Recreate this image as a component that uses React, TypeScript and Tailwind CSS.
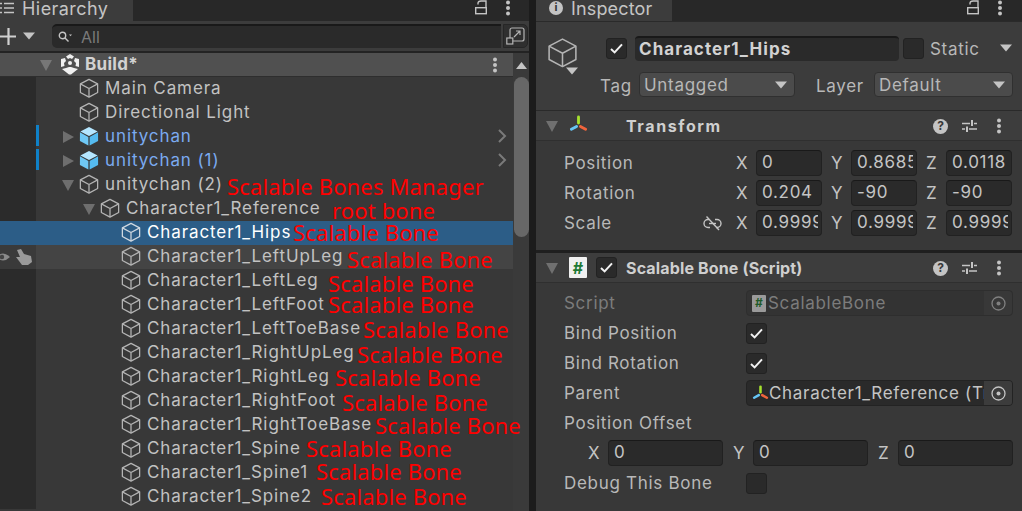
import React from "react";

const F = { fontFamily: "Inter, 'Noto Sans', sans-serif" };

function Cube({ size = 22, color = "#bdbdbd", fill = false, sw = 1.4 }: { size?: number; color?: string; fill?: boolean; sw?: number }) {
  if (fill) {
    return (
      <svg width={size} height={size} viewBox="0 0 22 22" className="shrink-0">
        <path d="M11 1 L20.5 6 L11 11 L1.5 6Z" fill="#b4e6ff" />
        <path d="M1 7 L10.3 12 V21.5 L1 16.5Z" fill="#6fc8f5" />
        <path d="M21 7 L11.7 12 V21.5 L21 16.5Z" fill="#55bbf0" />
      </svg>
    );
  }
  return (
    <svg width={size} height={size} viewBox="0 0 22 22" className="shrink-0" fill="none" stroke={color} strokeWidth={sw} strokeLinejoin="round">
      <path d="M11 1.5 L20.5 6.5 V16 L11 21 L1.5 16 V6.5Z" />
      <path d="M1.5 6.5 L11 11.5 L20.5 6.5 M11 11.5 V21" />
    </svg>
  );
}

function Tri({ open, color = "#6e6e6e" }: { open?: boolean; color?: string }) {
  return open ? (
    <svg width="14" height="14" viewBox="0 0 14 14" className="shrink-0"><path d="M1 2 H13 L7 13Z" fill={color} /></svg>
  ) : (
    <svg width="14" height="14" viewBox="0 0 14 14" className="shrink-0"><path d="M2 1 L13 7 L2 13Z" fill={color} /></svg>
  );
}

function Dots({ color = "#c4c4c4" }: { color?: string }) {
  return (
    <svg width="6" height="16" viewBox="0 0 6 16" className="shrink-0"><circle cx="3" cy="2.5" r="2" fill={color} /><circle cx="3" cy="8" r="2" fill={color} /><circle cx="3" cy="13.5" r="2" fill={color} /></svg>
  );
}

function Lock() {
  return (
    <svg width="14" height="15" viewBox="0 0 14 15" fill="none" stroke="#c4c4c4" strokeWidth="1.4" className="shrink-0">
      <rect x="1.7" y="7.7" width="10.6" height="6" />
      <path d="M4 4.5 V3.5 Q4 1 7 1 H12 V7.5" />
    </svg>
  );
}

function Axes({ size = 20 }: { size?: number }) {
  return (
    <svg width={size} height={size} viewBox="0 0 20 20" className="shrink-0" fill="none" strokeLinecap="round">
      <path d="M10 2 V8.5" stroke="#a6e22e" strokeWidth="3" />
      <path d="M8 12 L2.5 15" stroke="#66c6f5" strokeWidth="3" />
      <path d="M12 12 L17.5 15" stroke="#f0643c" strokeWidth="3" />
    </svg>
  );
}

function Check({ checked = false }: { checked?: boolean }) {
  return (
    <div className="w-[21px] h-[21px] rounded-[3px] bg-[#2a2a2a] border border-[#222] flex items-center justify-center shrink-0">
      {checked && (
        <svg width="13" height="11" viewBox="0 0 13 11" fill="none" stroke="#f2f2f2" strokeWidth="2"><path d="M1 6 L4.6 9.4 L12 1.4" /></svg>
      )}
    </div>
  );
}

function Caret({ color = "#c4c4c4" }: { color?: string }) {
  return <svg width="12" height="8" viewBox="0 0 12 8" className="shrink-0"><path d="M0 0.5 H12 L6 7.5Z" fill={color} /></svg>;
}

function Target({ color = "#a8a8a8" }: { color?: string }) {
  return (
    <svg width="15" height="15" viewBox="0 0 15 15" fill="none" className="shrink-0">
      <circle cx="7.5" cy="7.5" r="6.5" stroke={color} strokeWidth="1.3" />
      <circle cx="7.5" cy="7.5" r="2" fill={color} />
    </svg>
  );
}

function Help() {
  return (
    <div className="w-[15px] h-[15px] rounded-full bg-[#c4c4c4] flex items-center justify-center text-[#383838] text-[12px] font-bold leading-none shrink-0">?</div>
  );
}

function Sliders() {
  return (
    <svg width="15" height="14" viewBox="0 0 15 14" fill="none" stroke="#c4c4c4" strokeWidth="1.4" className="shrink-0">
      <path d="M0 4.5 H8 M12 4.5 H15 M0 10 H3 M7 10 H15" />
      <path d="M10 1 V7 M5 7.5 V13" strokeWidth="2" />
    </svg>
  );
}

function ScriptIcon({ dim = false, size = 18 }: { dim?: boolean; size?: number }) {
  return (
    <div
      className={`flex items-center justify-center font-bold shrink-0 rounded-[1px] ${dim ? "bg-[#9a9a9a] text-[#1f5a2a]" : "bg-[#f0f0f0] text-[#1f7a35]"}`}
      style={{ width: size, height: size + 3, fontSize: size - 2, lineHeight: 1 }}
    >#</div>
  );
}

type Item = { label: string; x: number; icon?: "cube" | "prefab"; tri?: "open" | "closed"; note?: string; nx?: number; ny?: number; blue?: boolean; bar?: boolean; chev?: boolean; sel?: boolean; hover?: boolean };

const rows: Item[] = [
  { label: "Main Camera", x: 79 },
  { label: "Directional Light", x: 79 },
  { label: "unitychan", x: 79, icon: "prefab", tri: "closed", blue: true, bar: true, chev: true },
  { label: "unitychan (1)", x: 79, icon: "prefab", tri: "closed", blue: true, bar: true, chev: true },
  { label: "unitychan (2)", x: 79, tri: "open", note: "Scalable Bones Manager", nx: 227, ny: 1 },
  { label: "Character1_Reference", x: 100, tri: "open", note: "root bone", nx: 332, ny: 1 },
  { label: "Character1_Hips", x: 121, sel: true, note: "Scalable Bone", nx: 293, ny: -1 },
  { label: "Character1_LeftUpLeg", x: 121, hover: true, note: "Scalable Bone", nx: 347, ny: 2 },
  { label: "Character1_LeftLeg", x: 121, note: "Scalable Bone", nx: 328, ny: 2 },
  { label: "Character1_LeftFoot", x: 121, note: "Scalable Bone", nx: 328, ny: -1 },
  { label: "Character1_LeftToeBase", x: 121, note: "Scalable Bone", nx: 363, ny: 0 },
  { label: "Character1_RightUpLeg", x: 121, note: "Scalable Bone", nx: 357, ny: 1 },
  { label: "Character1_RightLeg", x: 121, note: "Scalable Bone", nx: 335, ny: 0 },
  { label: "Character1_RightFoot", x: 121, note: "Scalable Bone", nx: 342, ny: 1 },
  { label: "Character1_RightToeBase", x: 121, note: "Scalable Bone", nx: 375, ny: 0 },
  { label: "Character1_Spine", x: 121, note: "Scalable Bone", nx: 306, ny: -1 },
  { label: "Character1_Spine1", x: 121, note: "Scalable Bone", nx: 316, ny: -2 },
  { label: "Character1_Spine2", x: 121, note: "Scalable Bone", nx: 321, ny: -1 },
];

function Row({ r }: { r: Item }) {
  const bg = r.sel ? "bg-[#2c5d87]" : r.hover ? "bg-[#444444]" : "";
  return (
    <div className={`relative h-[24px] flex items-center shrink-0 ${bg}`}>
      <div className={`absolute left-0 top-0 h-full w-[36px] ${r.sel ? "bg-[#2c5d87]" : r.hover ? "bg-[#3a3a3a]" : "bg-[#2b2b2b]"}`} />
      {r.bar && <div className="absolute left-[36px] top-0 w-[3px] h-[21px] bg-[#0f81c8]" />}
      {r.hover && (
        <svg width="33" height="20" viewBox="0 0 33 20" className="absolute left-0 top-[2px]">
          <path d="M-4 10 Q3 3 10 10 Q3 17 -4 10Z" fill="#8a8a8a" />
          <circle cx="2" cy="10" r="2.2" fill="#444444" />
          <path d="M17 3 L21 2 L24 7 L31 9 L32 15 L28 18 L22 18 L16 10 L20 10Z" fill="#9a9a9a" />
        </svg>
      )}
      {r.tri && (
        <div className="absolute top-[5px]" style={{ left: r.x - 18 }}><Tri open={r.tri === "open"} /></div>
      )}
      <div className="absolute top-[1px]" style={{ left: r.x }}>
        <Cube size={20} fill={r.icon === "prefab"} color={r.sel ? "#d0d8e0" : "#b4b4b4"} sw={1.4} />
      </div>
      <span
        className={`absolute top-0 leading-[22px] text-[17px] tracking-[0.9px] whitespace-nowrap ${r.blue ? "text-[#7baaf0]" : r.sel ? "text-[#ffffff]" : "text-[#c2c2c2]"}`}
        style={{ left: r.x + 26 }}
      >{r.label}</span>
      {r.chev && (
        <svg width="9" height="14" viewBox="0 0 9 14" fill="none" stroke="#7a7a7a" strokeWidth="2" className="absolute left-[498px] top-[4px]"><path d="M1 1 L7 7 L1 13" /></svg>
      )}
      {r.note && (
        <span
          className="absolute text-[#ff0000] text-[22px] leading-[24px] tracking-[0.15px] whitespace-nowrap z-10"
          style={{ left: r.nx, top: r.ny, fontFamily: "'Noto Sans', sans-serif" }}
        >{r.note}</span>
      )}
    </div>
  );
}

function Hierarchy() {
  return (
    <div className="w-[529px] h-full flex flex-col shrink-0 bg-[#383838]">
      <div className="h-[21px] shrink-0 flex bg-[#282828]">
        <div className="w-[133px] bg-[#3c3c3c] flex items-center">
          <svg width="14" height="12" viewBox="0 0 14 12" className="shrink-0 -translate-y-[3px]" stroke="#c4c4c4" strokeWidth="1.3"><path d="M0 1.5 H2 M4 1.5 H14 M0 6 H2 M4 6 H14 M0 10.5 H2 M4 10.5 H14" /></svg>
          <span className="ml-[8px] text-[18px] leading-[18px] text-[#c4c4c4] tracking-[0.45px] -translate-y-[2px]">Hierarchy</span>
        </div>
        <div className="flex-1 flex items-center justify-end pr-[18px] gap-[17px] -translate-y-[3px]">
          <Lock />
          <Dots />
        </div>
      </div>
      <div className="h-[32px] shrink-0 bg-[#3c3c3c] border-b-2 border-[#232323] flex items-center">
        <svg width="17" height="17" viewBox="0 0 17 17" stroke="#d0d0d0" strokeWidth="2.2" className="shrink-0"><path d="M0 8.5 H16 M8.5 0 V17" /></svg>
        <div className="ml-[6px]"><Caret /></div>
        <div className="ml-[17px] w-[449px] h-[24px] rounded-l-[5px] bg-[#2a2a2a] border-t-2 border-[#191919] flex items-center pl-[6px]">
          <svg width="14" height="12" viewBox="0 0 14 12" fill="none" stroke="#c4c4c4" strokeWidth="1.4" className="shrink-0"><circle cx="4.5" cy="4.5" r="3.2" /><path d="M7 7 L10.5 10.5" /><path d="M11 3.5 H14 L12.5 5.2Z" fill="#c4c4c4" stroke="none" /></svg>
          <span className="ml-[9px] text-[#7a7a7a] text-[16px] leading-none">All</span>
        </div>
        <div className="ml-[2px] w-[25px] h-[24px] rounded-r-[5px] bg-[#2f2f2f] border border-[#262626] flex items-center justify-center">
          <svg width="19" height="18" viewBox="0 0 19 18" fill="none" stroke="#b4b4b4" strokeWidth="1.2">
            <rect x="4" y="1" width="14" height="13" rx="2" />
            <rect x="0.8" y="11" width="6" height="6" fill="#2f2f2f" />
            <path d="M8 10 L14 4 M10 4 H14 V8" />
          </svg>
        </div>
      </div>
      <div className="flex-1 flex min-h-0">
        <div className="w-[513px] flex flex-col relative z-10">
          <div className="h-[24px] shrink-0 relative bg-[#505050] border-b border-[#2e2e2e] flex items-center">
            <div className="absolute left-[39px] top-[5px]"><Tri open color="#777777" /></div>
            <svg width="20" height="21" viewBox="0 0 20 21" className="absolute left-[60px] top-[1px]" fill="#f0f0f0">
              <path d="M10 0 L14 2.5 L12 5 L10 4 L8 5 L6 2.5Z" />
              <path d="M1 5 L5 4 L6 7 L4 9 L4.5 12 L1 13Z" />
              <path d="M19 5 L15 4 L14 7 L16 9 L15.5 12 L19 13Z" />
              <path d="M6 14 L9 13 H11 L14 14 L18 15 L11 20.5 H9 L2 15Z" />
              <circle cx="10" cy="9" r="2" />
            </svg>
            <span className="absolute left-[85px] top-0 leading-[22px] text-[17px] font-bold text-[#d2d2d2] tracking-[0.3px]">Build*</span>
            <div className="absolute left-[492px] top-[4px]"><Dots /></div>
          </div>
          {rows.map((r) => (
            <Row key={r.label} r={r} />
          ))}
        </div>
        <div className="w-[16px] bg-[#3a3a3a] flex flex-col items-center shrink-0 pt-[9px]">
          <svg width="11" height="7" viewBox="0 0 11 7"><path d="M0 7 L5.5 0 L11 7Z" fill="#c4c4c4" /></svg>
          <div className="mt-[8px] w-[15px] h-[160px] rounded-[8px] bg-[#676767]" />
        </div>
      </div>
    </div>
  );
}

function VField({ v, w = "w-[66px]" }: { v: string; w?: string }) {
  return (
    <div className={`${w} h-[26px] shrink-0 rounded-[4px] bg-[#2a2a2a] border border-[#212121] border-t-[#191919] flex items-center pl-[5px] pr-[3px]`}>
      <span className="text-[#c4c4c4] text-[17px] tracking-[0.7px] whitespace-nowrap overflow-hidden">{v}</span>
    </div>
  );
}

function Axis({ a, v, w, lw = "w-[21px] pl-[1px]" }: { a: string; v: string; w?: string; lw?: string }) {
  return (
    <div className="flex items-center">
      <span className={`${lw} text-[#c4c4c4] text-[17px] leading-none`}>{a}</span>
      <VField v={v} w={w} />
    </div>
  );
}

function Label({ children, dim, className = "" }: { children: React.ReactNode; dim?: boolean; className?: string }) {
  return <span className={`text-[17px] tracking-[0.7px] leading-none whitespace-nowrap ${dim ? "text-[#7c7c7c]" : "text-[#b8b8b8]"} ${className}`}>{children}</span>;
}

function Prop({ label, children, dim }: { label: string; children?: React.ReactNode; dim?: boolean }) {
  return (
    <div className="h-[30px] flex items-center shrink-0 pl-[28px] pr-[9px]">
      <div className="w-[182px] shrink-0"><Label dim={dim}>{label}</Label></div>
      {children}
    </div>
  );
}

function Vec({ label, x, y, z, link }: { label: string; x: string; y: string; z: string; link?: boolean }) {
  return (
    <div className="h-[30px] flex items-center shrink-0 pl-[28px] pr-[9px]">
      <div className="w-[158px] shrink-0 flex justify-between items-center">
        <Label>{label}</Label>
        {link && (
          <svg width="19" height="15" viewBox="0 0 19 15" fill="none" stroke="#c4c4c4" strokeWidth="1.4">
            <path d="M6 3.5 H5 A4 4 0 0 0 5 11.5 H7 M12 3.5 H14 A4 4 0 0 1 14 11.5 H13" />
            <path d="M6 7.5 H13" />
            <path d="M3.5 0.5 L16 14" stroke="#c4c4c4" />
          </svg>
        )}
      </div>
      <div className="ml-[13px] flex gap-[8px]">
        <Axis a="X" v={x} />
        <Axis a="Y" v={y} />
        <Axis a="Z" v={z} />
      </div>
    </div>
  );
}

function CompHeader({ icon, check, title, titleClass }: { icon: React.ReactNode; check?: boolean; title: string; titleClass: string }) {
  return (
    <div className="h-[30px] shrink-0 bg-[#3d3d3d] border-b border-[#2f2f2f] relative flex items-center">
      <div className="absolute left-[9px] top-[8px]"><Tri open color="#707070" /></div>
      <div className="absolute left-[33px] top-[4px]">{icon}</div>
      {check && <div className="absolute left-[60px] top-[4px]"><Check checked /></div>}
      <span className={`absolute left-[90px] top-[4px] text-[#cfcfcf] text-[16px] font-bold leading-[22px] whitespace-nowrap ${titleClass}`}>{title}</span>
      <div className="absolute left-[397px] top-[7px] flex items-center">
        <Help />
        <div className="ml-[14px]"><Sliders /></div>
        <div className="ml-[19px]"><Dots /></div>
      </div>
    </div>
  );
}

function Inspector() {
  return (
    <div className="w-[486px] ml-[7px] h-full flex flex-col shrink-0 bg-[#383838]">
      <div className="h-[21px] shrink-0 flex bg-[#282828]">
        <div className="w-[136px] bg-[#3c3c3c] flex items-center pl-[13px]">
          <div className="w-[14px] h-[14px] rounded-full bg-[#c4c4c4] flex items-center justify-center text-[#333] text-[11px] font-bold leading-none -translate-y-[3px]">i</div>
          <span className="ml-[8px] text-[18px] leading-[18px] text-[#c4c4c4] tracking-[0.15px] -translate-y-[2px]">Inspector</span>
        </div>
        <div className="flex-1 flex items-center justify-end pr-[19px] gap-[17px] -translate-y-[3px]">
          <Lock />
          <Dots />
        </div>
      </div>

      <div className="h-[90px] shrink-0 bg-[#3c3c3c] border-y border-[#2a2a2a] relative">
        <div className="absolute left-[11px] top-[15px]"><Cube size={31} color="#b4b4b4" sw={1.1} /></div>
        <div className="absolute left-[30px] top-[45px]"><Caret /></div>
        <div className="absolute left-[70px] top-[16px]"><Check checked /></div>
        <div className="absolute left-[99px] top-[14px] w-[264px] h-[25px] rounded-[4px] bg-[#2a2a2a] border-t-2 border-[#191919] flex items-center pl-[4px]">
          <span className="text-[#d2d2d2] text-[17px] font-bold tracking-[1.05px]">Character1_Hips</span>
        </div>
        <div className="absolute left-[367px] top-[16px]"><Check /></div>
        <div className="absolute left-[394px] top-[15px]"><Label>Static</Label></div>
        <div className="absolute left-[464px] top-[22px]"><Caret /></div>
        <div className="absolute left-[64px] top-[52px]"><Label>Tag</Label></div>
        <div className="absolute left-[103px] top-[50px] w-[156px] h-[25px] rounded-[4px] bg-[#4b4b4b] border border-[#303030] flex items-center justify-between pl-[4px] pr-[7px]">
          <Label className="translate-y-[1px]">Untagged</Label><Caret />
        </div>
        <div className="absolute left-[280px] top-[52px]"><Label>Layer</Label></div>
        <div className="absolute left-[338px] top-[50px] w-[139px] h-[25px] rounded-[4px] bg-[#4b4b4b] border border-[#303030] flex items-center justify-between pl-[4px] pr-[7px]">
          <Label className="translate-y-[1px]">Default</Label><Caret />
        </div>
      </div>

      <CompHeader icon={<Axes size={19} />} title="Transform" titleClass="tracking-[1.6px]" />
      <div className="pt-[7px] flex flex-col shrink-0">
        <Vec label="Position" x="0" y="0.8685" z="0.0118" />
        <Vec label="Rotation" x="0.204" y="-90" z="-90" />
        <Vec label="Scale" x="0.9999" y="0.9999" z="0.9999" link />
      </div>
      <div className="h-[3px] mt-[12px] shrink-0 bg-[#1f1f1f]" />

      <CompHeader icon={<ScriptIcon />} check title="Scalable Bone (Script)" titleClass="tracking-[0.15px]" />
      <div className="pt-[5px] flex flex-col shrink-0">
        <Prop label="Script" dim>
          <div className="w-[267px] h-[26px] rounded-[4px] bg-[#333333] border border-[#2e2e2e] flex items-center pl-[5px] relative">
            <ScriptIcon dim size={14} />
            <span className="ml-[2px] text-[#7c7c7c] text-[17px] tracking-[0.7px] translate-y-[1px]">ScalableBone</span>
            <div className="absolute right-0 top-0 h-full w-[28px] flex items-center justify-center bg-[#383838] rounded-r-[4px]"><Target color="#808080" /></div>
          </div>
        </Prop>
        <Prop label="Bind Position"><Check checked /></Prop>
        <Prop label="Bind Rotation"><Check checked /></Prop>
        <Prop label="Parent">
          <div className="w-[267px] h-[26px] rounded-[4px] bg-[#2a2a2a] border border-[#232323] flex items-center pl-[5px] relative overflow-hidden">
            <Axes size={17} />
            <span className="text-[#c4c4c4] text-[17px] tracking-[0.7px] whitespace-nowrap translate-y-[1px]">Character1_Reference (Transform)</span>
            <div className="absolute right-0 top-0 h-full w-[28px] flex items-center justify-center bg-[#3c3c3c]"><Target color="#c4c4c4" /></div>
          </div>
        </Prop>
        <Prop label="Position Offset" />
        <div className="h-[30px] flex items-center shrink-0 pl-[52px] pr-[9px] gap-[10px]">
          <Axis a="X" v="0" w="w-[115px]" lw="w-[20px]" />
          <Axis a="Y" v="0" w="w-[115px]" lw="w-[20px]" />
          <Axis a="Z" v="0" w="w-[115px]" lw="w-[20px]" />
        </div>
        <Prop label="Debug This Bone"><Check /></Prop>
      </div>
    </div>
  );
}

export default function App() {
  return (
    <div className="w-[1022px] h-[511px] flex overflow-hidden bg-[#1c1c1c]" style={F}>
      <Hierarchy />
      <Inspector />
    </div>
  );
}
